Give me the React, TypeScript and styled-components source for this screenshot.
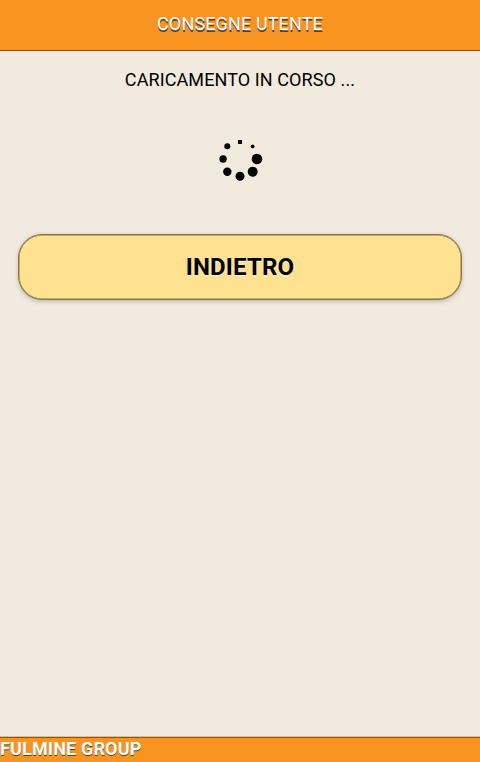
import React from "react";
import styled, { createGlobalStyle } from "styled-components";

const GlobalStyle = createGlobalStyle`
  *, *::before, *::after { box-sizing: border-box; }
  body { margin: 0; background: #f2eadf; font-family: Roboto, sans-serif; color: #000; }
`;

const Page = styled.div`
  display: flex;
  flex-direction: column;
  height: 100vh;
  background: #f2eadf;
`;

const Header = styled.header`
  height: 51px;
  flex: none;
  background: #f99420;
  border-bottom: 1px solid #8c5212;
  display: flex;
  justify-content: center;
`;

const Title = styled.h1`
  margin: 0;
  font-size: 18px;
  font-weight: 400;
  line-height: 48px;
  letter-spacing: 0.14px;
  color: #fff;
  text-shadow: 0 1.5px 0.5px #444;
`;

const Content = styled.main`
  flex: 1;
  display: flex;
  flex-direction: column;
  align-items: center;
  padding: 18px 18px 0;
`;

const Status = styled.p`
  margin: 0;
  font-size: 18px;
  line-height: 22px;
  letter-spacing: 0.1px;
`;

const Spinner = styled.svg`
  display: block;
  margin-top: 45px;
`;

const BackButton = styled.button`
  width: 100%;
  height: 66px;
  margin-top: 50px;
  padding: 0;
  border: 1px solid #8a7448;
  border-radius: 24px;
  background: #ffe28f;
  box-shadow: inset 0 0 0 0.5px #8a7448, 0 1.5px 4.5px rgba(0, 0, 0, 0.2);
  font: 700 24px/63px Roboto, sans-serif;
  letter-spacing: 0.15px;
  color: #000;
  text-shadow: 0 1px 0 #eee;
`;

const Footer = styled.footer`
  height: 25px;
  flex: none;
  border-top: 1px solid #8c5212;
  background: #f99420;
  box-shadow: 0 -1px 0 #e8bd80;
  font-size: 18px;
  font-weight: 700;
  line-height: 22px;
  letter-spacing: 0.15px;
  color: #fff;
  text-shadow: 0 1px 0.5px #444;
`;

const dots = [
  { x: 42.6, y: 16.4, r: 1.9 },
  { x: 47, y: 29, r: 5.3 },
  { x: 42.7, y: 41.7, r: 5 },
  { x: 30, y: 46.3, r: 4.5 },
  { x: 17.3, y: 41.7, r: 4.2 },
  { x: 13.1, y: 29, r: 3.7 },
  { x: 17.3, y: 16.3, r: 3 },
];

export default function App() {
  return (
    <Page>
      <GlobalStyle />
      <Header><Title>CONSEGNE UTENTE</Title></Header>
      <Content>
        <Status>CARICAMENTO IN CORSO ...</Status>
        <Spinner width="60" height="48" viewBox="0 6 60 48" aria-hidden="true">
          <rect x="28" y="10" width="4" height="4" />
          {dots.map((d) => <circle key={`${d.x}-${d.y}`} cx={d.x} cy={d.y} r={d.r} />)}
        </Spinner>
        <BackButton type="button">INDIETRO</BackButton>
      </Content>
      <Footer>FULMINE GROUP</Footer>
    </Page>
  );
}
